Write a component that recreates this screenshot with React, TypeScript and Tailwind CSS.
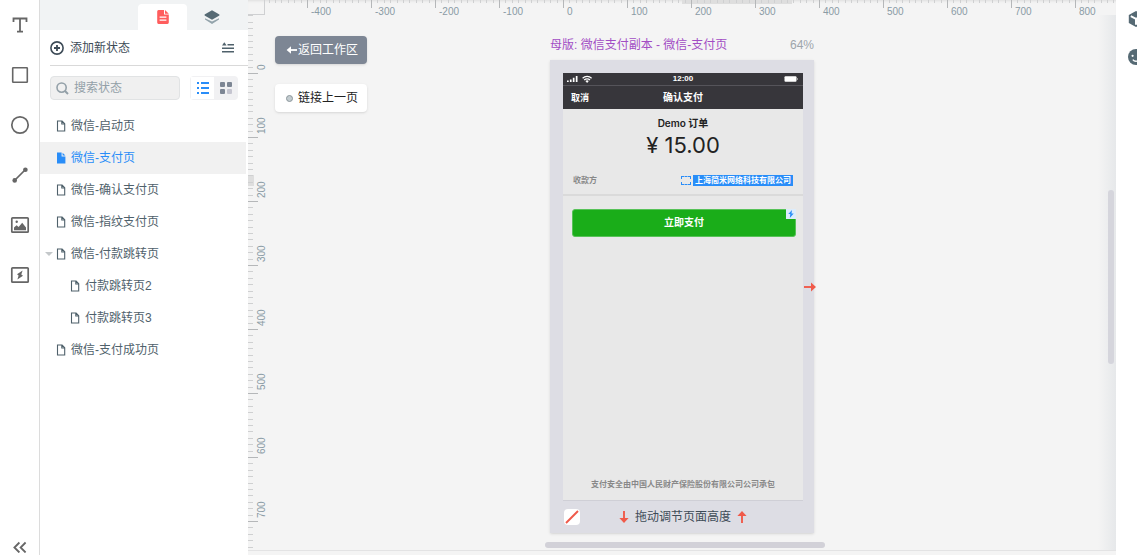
import React, { useState } from 'react';
import clsx from 'clsx';

interface PageState {
  name: string;
  nested?: boolean;
  expanded?: boolean;
}

const STATES: PageState[] = [
  { name: '微信-启动页' },
  { name: '微信-支付页' },
  { name: '微信-确认支付页' },
  { name: '微信-指纹支付页' },
  { name: '微信-付款跳转页', expanded: true },
  { name: '付款跳转页2', nested: true },
  { name: '付款跳转页3', nested: true },
  { name: '微信-支付成功页' },
];

const TOOLS = [
  {
    label: 'Text',
    icon: (
      <path
        d="M3.5 7V3.5h13V7M10 3.5v13M7 16.6h6"
        fill="none"
        stroke="currentColor"
        strokeWidth="1.8"
      />
    ),
  },
  {
    label: 'Rectangle',
    icon: <rect x="2.7" y="2.7" width="14.6" height="14.6" rx=".6" fill="none" stroke="currentColor" strokeWidth="1.6" />,
  },
  {
    label: 'Ellipse',
    icon: <circle cx="10" cy="10" r="8.2" fill="none" stroke="currentColor" strokeWidth="1.7" />,
  },
  {
    label: 'Line',
    icon: (
      <>
        <path d="M4.5 15.5l11-11" stroke="currentColor" strokeWidth="1.7" />
        <circle cx="4.7" cy="15.4" r="2.3" fill="currentColor" />
        <circle cx="15.4" cy="4.8" r="2.3" fill="currentColor" />
      </>
    ),
  },
  {
    label: 'Image',
    icon: (
      <>
        <rect x="1.8" y="2.8" width="16.4" height="14.4" rx=".8" fill="none" stroke="currentColor" strokeWidth="1.7" />
        <path d="M4 15.2v-2.6l2.6-2.4 2 1.8 3.6-4.2 3.8 4.6v2.8z" fill="currentColor" />
        <circle cx="6.7" cy="6.8" r="1.2" fill="currentColor" />
      </>
    ),
  },
  {
    label: 'Quick component',
    icon: (
      <>
        <rect x="1.8" y="2.8" width="16.4" height="14.4" rx=".8" fill="none" stroke="currentColor" strokeWidth="1.7" />
        <path d="M12.6 5.6L7 9.2l1.6 1.2-1.2 4L13 10.8l-1.7-1.2z" fill="currentColor" />
      </>
    ),
  },
];

const MAJOR = 64;
const MINOR = 6.4;

interface RulerProps {
  zero: number;
  // first and last tick, in tenths of a major step
  from: number;
  to: number;
  selection: [number, number];
  vertical?: boolean;
}

function Ruler({ zero, from, to, selection, vertical }: RulerProps) {
  const ticks: React.ReactNode[] = [];
  for (let i = from; i <= to; i++) {
    const major = i % 10 === 0;
    const p = Math.round(zero + i * MINOR);
    const len = major ? (vertical ? 10 : 8) : vertical ? 5 : 3;
    ticks.push(
      <rect
        key={i}
        x={vertical ? 0 : p}
        y={vertical ? p : 0}
        width={vertical ? len : 1}
        height={vertical ? 1 : len}
        fill={major ? '#b5b7b9' : '#cfd0d1'}
      />
    );
    if (major) {
      ticks.push(
        <text
          key={`t${i}`}
          fontSize="10"
          fill="#8a9ba5"
          transform={vertical ? `translate(17 ${zero + (i / 10) * MAJOR - 3}) rotate(-90)` : undefined}
          x={vertical ? 0 : p + 4}
          y={vertical ? 0 : 15}
        >
          {i * 10}
        </text>
      );
    }
  }
  const [start, end] = selection;
  return (
    <svg className={vertical ? 'w-[18px] h-full block' : 'w-full h-[18px] block'} aria-hidden="true">
      <rect
        x={vertical ? 0 : start}
        y={vertical ? start : 0}
        width={vertical ? 6 : end - start}
        height={vertical ? end - start : 4}
        fill="#dedede"
      />
      {ticks}
    </svg>
  );
}

function FileIcon({ filled }: { filled: boolean }) {
  return (
    <svg className="w-[10px] h-3 shrink-0" viewBox="0 0 10 12" aria-hidden="true">
      {filled ? (
        <path d="M1 .6h4.6v4h3.8v7H1zM6.6.8l2.8 2.8H6.6z" fill="currentColor" />
      ) : (
        <path d="M1.5 1h4.6l2.6 2.8V11H1.5zM5.8 1v3h3" fill="none" stroke="currentColor" strokeWidth="1.1" />
      )}
    </svg>
  );
}

function Arrow({ className }: { className: string }) {
  return (
    <svg className={className} viewBox="0 0 14 14" aria-hidden="true">
      <path d="M1 7h8" stroke="currentColor" strokeWidth="1.9" />
      <path d="M8 2.4L13 7l-5 4.6z" fill="currentColor" />
    </svg>
  );
}

function Toolbar() {
  return (
    <nav className="w-10 shrink-0 flex flex-col justify-between bg-white border-r border-[#dcdcdc] text-[#666]">
      <div className="flex flex-col">
        {TOOLS.map((tool) => (
          <button key={tool.label} aria-label={tool.label} className="h-[50px] flex items-center justify-center">
            <svg className="w-5 h-5" viewBox="0 0 20 20">
              {tool.icon}
            </svg>
          </button>
        ))}
      </div>
      <button aria-label="Collapse" className="h-4 flex items-center justify-center">
        <svg className="w-[14px] h-3" viewBox="0 0 14 12">
          <path d="M6.4 1.5l-5 5 5 5M12.6 1.5l-5 5 5 5" fill="none" stroke="currentColor" strokeWidth="1.8" />
        </svg>
      </button>
    </nav>
  );
}

function Sidebar() {
  const [active, setActive] = useState(1);

  return (
    <aside className="w-52 shrink-0 bg-white text-[#4f616b]">
      <div className="h-[30px] pt-1 flex justify-end bg-[#f1f3f4]">
        <button aria-label="Pages" className="w-[49px] flex items-center justify-center bg-white rounded-t text-[#ff5d5d]">
          <svg className="w-3 h-[14px]" viewBox="0 0 12 14">
            <path d="M1.5 0H7v4.6h4.8v8A1.4 1.4 0 0 1 10.4 14H1.5A1.4 1.4 0 0 1 .2 12.6V1.4A1.4 1.4 0 0 1 1.5 0zM8 0l3.8 3.8H8z" fill="currentColor" />
            <path d="M2.6 7.2h6.8M2.6 10.2h6.8" stroke="#fff" strokeWidth="1.3" />
          </svg>
        </button>
        <button aria-label="Layers" className="w-[49px] mr-3 flex items-center justify-center">
          <svg className="w-4 h-[14px]" viewBox="0 0 16 14">
            <path d="M1 8.2l7 3.4 7-3.4v1.4L8 14 1 9.6z" fill="#93a3ab" />
            <path d="M8 .2l7.4 4.3v1L8 9.8.6 5.5v-1z" fill="#566a74" />
          </svg>
        </button>
      </div>

      <div className="ml-[10px] h-9 flex items-center justify-between pr-[14px] border-b border-[#d9d9d9]">
        <button className="flex items-center gap-[6px] text-[#3d4b57]">
          <svg className="w-[14px] h-[14px]" viewBox="0 0 14 14" aria-hidden="true">
            <circle cx="7" cy="7" r="6.1" fill="none" stroke="currentColor" strokeWidth="1.6" />
            <path d="M7 4v6M4 7h6" stroke="currentColor" strokeWidth="1.8" />
          </svg>
          添加新状态
        </button>
        <button aria-label="Sort">
          <svg className="w-3 h-[11px]" viewBox="0 0 12 11">
            <path d="M5.5 2.7H12M0 6.2h12M0 9.7h12" stroke="currentColor" strokeWidth="1.4" />
            <path d="M0 3.5L2.3.3l2.3 3.2z" fill="currentColor" />
          </svg>
        </button>
      </div>

      <div className="flex justify-between p-[10px]">
        <label className="w-[130px] h-6 px-[5px] flex items-center gap-[5px] bg-[#f0f0f0] border border-[#e1e3e4] rounded-sm">
          <svg className="w-[13px] h-[13px] shrink-0" viewBox="0 0 13 13" aria-hidden="true">
            <circle cx="5.6" cy="5.6" r="4.6" fill="none" stroke="#93a0a8" strokeWidth="1.6" />
            <path d="M9 9l3 3" stroke="#93a0a8" strokeWidth="2" />
          </svg>
          <input
            aria-label="搜索状态"
            placeholder="搜索状态"
            className="w-full min-w-0 bg-transparent outline-none placeholder:text-[#93a0a8]"
          />
        </label>
        <div className="w-12 h-6 p-px flex bg-[#f1f1f3] rounded-sm">
          <button aria-label="List view" className="flex-1 flex items-center justify-center bg-white">
            <svg className="w-3 h-3" viewBox="0 0 12 12">
              <path d="M0 1h2M4 1h8M0 6h2M4 6h8M0 11h2M4 11h8" stroke="#298df8" strokeWidth="1.8" />
            </svg>
          </button>
          <button aria-label="Grid view" className="flex-1 flex items-center justify-center">
            <svg className="w-3 h-3" viewBox="0 0 12 12">
              <rect width="5" height="5" rx="1" fill="#7d8694" />
              <rect x="7" width="5" height="5" rx="1" fill="#7d8694" />
              <rect y="7" width="5" height="5" rx="1" fill="#7d8694" />
              <rect x="7" y="7" width="5" height="5" rx="1" fill="#c5c5d0" />
            </svg>
          </button>
        </div>
      </div>

      <ul className="pr-[2px]">
        {STATES.map((state, i) => (
          <li key={state.name}>
            <button
              onClick={() => setActive(i)}
              className={clsx(
                'w-full h-8 flex items-center text-left',
                state.nested ? 'pl-[19px]' : 'pl-[5px]',
                i === active && 'bg-[#f1f1f1] text-[#298df8]'
              )}
            >
              <span className="w-[11px] flex items-center">
                {state.expanded && (
                  <svg className="w-2 h-1" viewBox="0 0 8 4" aria-hidden="true">
                    <path d="M0 0h8L4 4z" fill="#c4c8ca" />
                  </svg>
                )}
              </span>
              <FileIcon filled={i === active} />
              <span className="ml-[5px]">{state.name}</span>
            </button>
          </li>
        ))}
      </ul>
    </aside>
  );
}

function Phone() {
  return (
    <div className="h-[428px] flex flex-col bg-[#e8e8e8] border-b border-[#cfcfd6] text-[#222]">
      <div className="h-[13px] px-1 grid grid-cols-3 items-center bg-[#37363b] border-b border-[#55545a] text-white">
        <svg className="w-[26px] h-2" viewBox="0 0 26 8" aria-hidden="true">
          <path d="M0 5.4h1.7V7H0zM2.9 4.4h1.7V7H2.9zM5.8 2.8h1.7V7H5.8zM8.8 1h1.7v6H8.8z" fill="#fff" />
          <path d="M15.6 3.2a6.6 6.6 0 0 1 9 0M17.2 5a4.1 4.1 0 0 1 5.8 0" fill="none" stroke="#fff" strokeWidth="1.2" />
          <path d="M18.4 6a2.4 2.4 0 0 1 3.4 0L20.1 8z" fill="#fff" />
        </svg>
        <span className="text-center text-[8px] leading-3 font-bold">12:00</span>
        <svg className="w-[15px] h-[6px] justify-self-end" viewBox="0 0 15 6" aria-hidden="true">
          <rect x=".5" y=".3" width="12" height="5.4" rx="1" fill="#fff" />
          <path d="M13.2 2h.8v2h-.8z" fill="#aaa" />
        </svg>
      </div>
      <div className="h-[23px] px-2 grid grid-cols-3 items-center bg-[#37363b] text-white font-bold">
        <button className="text-left text-[9px]">取消</button>
        <span className="text-center text-[10px]">确认支付</span>
      </div>
      <p className="mt-2 text-center font-['Inter','Noto_Sans_CJK_SC',sans-serif] text-[10px] leading-3 font-semibold">
        Demo 订单
      </p>
      <p className="mt-1 text-center font-['Inter','Noto_Sans_CJK_SC',sans-serif] text-[22px] leading-6">
        ¥ 15.00
      </p>
      <div className="mt-[18px] h-[21px] px-[10px] flex items-start justify-between text-[8px] leading-3 border-b-2 border-[#dadada]">
        <span className="font-bold text-[#888]">收款方</span>
        <span className="flex items-center gap-[2px]">
          <span className="w-[10px] h-[9px] border border-dashed border-[#298df8]" />
          <span className="w-[100px] h-[11px] leading-[11px] text-center bg-[#298df8] text-white font-bold">上海简米网络科技有限公司</span>
        </span>
      </div>
      <button className="relative ml-[9px] mr-[7px] mt-[13px] h-7 rounded-[3px] bg-[#1aad19] border border-[#57c258] text-white text-[10px] font-bold">
        立即支付
        <span className="absolute -top-px -right-px w-[10px] h-[10px] flex items-center justify-center bg-[#dcecfb]">
          <svg className="w-[6px] h-2" viewBox="0 0 6 8" aria-hidden="true">
            <path d="M4 0L.3 4h2L1.8 8l3.9-4.5H3.5z" fill="#298df8" />
          </svg>
        </span>
      </button>
      <p className="mt-auto mb-[9px] text-center text-[8px] leading-3 font-bold text-[#888]">
        支付安全由中国人民财产保险股份有限公司公司承包
      </p>
    </div>
  );
}

function Artboard() {
  return (
    <section>
      <div className="h-[45px] pt-[22px] flex justify-between leading-4">
        <h1 className="text-[#a24dc4]">母版: 微信支付副本 - 微信-支付页</h1>
        <span className="text-[#9da5ab]">64%</span>
      </div>
      <div className="relative pl-[13px] pt-[13px] pr-[11px] bg-[#dddde4] shadow-sm">
        <Phone />
        <div className="h-8 pb-px pl-px flex items-center text-[#3d4b57]">
          <button aria-label="Background colour" className="w-4 h-4 bg-white rounded-sm">
            <svg className="w-4 h-4" viewBox="0 0 16 16">
              <path d="M2 14L14 2" stroke="#ef5a4b" strokeWidth="1.9" />
            </svg>
          </button>
          <button className="ml-[37px] flex items-center gap-1">
            <Arrow className="w-[14px] h-[14px] rotate-90 text-[#f05a4a]" />
            拖动调节页面高度
            <Arrow className="w-[14px] h-[14px] -rotate-90 text-[#f05a4a]" />
          </button>
        </div>
        <button aria-label="Resize width" className="absolute top-[220px] -right-[3px] text-[#f05a4a]">
          <Arrow className="w-[14px] h-[14px]" />
        </button>
      </div>
      <div className="mt-[9px] -ml-[5px] w-[280px] h-[6px] rounded-full bg-[#d2d1d8]" />
    </section>
  );
}

function Canvas() {
  return (
    <main className="flex-1 min-w-0 flex flex-col bg-[#f4f4f4]">
      <div className="h-[15px] flex shadow-[inset_0_3px_3px_-2px_#ddd]">
        <div className="w-[17px] shrink-0 border-r border-b border-[#cfd0d2]" />
        <div className="flex-1 min-w-0 h-[18px] overflow-hidden">
          <Ruler zero={298} from={-46} to={86} selection={[417, 527]} />
        </div>
      </div>
      <div className="flex-1 grid grid-cols-[1fr_264px_1fr] border-b border-[#e3e3e4]">
        <div className="flex">
          <div className="relative w-[18px] shrink-0 overflow-hidden">
            <div className="absolute inset-0">
              <Ruler vertical zero={58} from={-9} to={74} selection={[160, 171]} />
            </div>
          </div>
          <div className="pl-[9px] pt-[21px] flex flex-col gap-5 items-start">
            <button className="w-[92px] h-7 pl-[11px] flex items-center rounded-sm bg-[#7d8694] text-white shadow-sm">
              <svg className="w-3 h-[10px] shrink-0" viewBox="0 0 12 10" aria-hidden="true">
                <path d="M3 5h8" stroke="#fff" strokeWidth="1.8" />
                <path d="M5 1.2L.6 5 5 8.8z" fill="#fff" />
              </svg>
              返回工作区
            </button>
            <button className="w-[92px] h-7 pl-[11px] flex items-center gap-[5px] rounded-sm bg-white text-[#222] shadow-sm">
              <span className="w-[7px] h-[7px] rounded-full bg-[#c3ccd0] border border-[#8c979c]" />
              链接上一页
            </button>
          </div>
        </div>
        <Artboard />
        <div className="flex justify-end">
          <div className="w-[18px] pl-[10px] pt-[175px] bg-linear-to-r from-[#f4f4f4] to-[#e6e8ea]">
            <div className="w-[6px] h-[174px] rounded-full bg-[#d5d5dc]" />
          </div>
        </div>
      </div>
      <div className="h-1" />
    </main>
  );
}

function RightBar() {
  return (
    <aside className="w-[21px] shrink-0 pl-3 pt-[11px] overflow-hidden flex flex-col gap-[22px] bg-white text-[#566a74]">
      <button aria-label="Components" className="w-4 h-4">
        <svg className="w-4 h-4" viewBox="0 0 16 16">
          <path d="M8 0l7.2 4v8L8 16 .8 12V4z" fill="currentColor" />
          <path d="M2.8 5.2L8 7.8l5.2-2.6M8 7.8v6" fill="none" stroke="#fff" strokeWidth="2" />
        </svg>
      </button>
      <button aria-label="Icons" className="w-4 h-4">
        <svg className="w-4 h-4" viewBox="0 0 16 16">
          <circle cx="8" cy="8" r="8" fill="currentColor" />
          <circle cx="4.6" cy="6.8" r="1.1" fill="#fff" />
          <circle cx="11.4" cy="6.8" r="1.1" fill="#fff" />
          <path d="M4.8 10.6c1.6 2.2 4.8 2.2 6.4 0" fill="none" stroke="#fff" strokeWidth="1.3" />
        </svg>
      </button>
    </aside>
  );
}

export default function App() {
  return (
    <div className="min-h-screen flex overflow-hidden font-['Liberation_Sans','Noto_Sans_CJK_SC',sans-serif] text-[12px] leading-4">
      <Toolbar />
      <Sidebar />
      <Canvas />
      <RightBar />
    </div>
  );
}
